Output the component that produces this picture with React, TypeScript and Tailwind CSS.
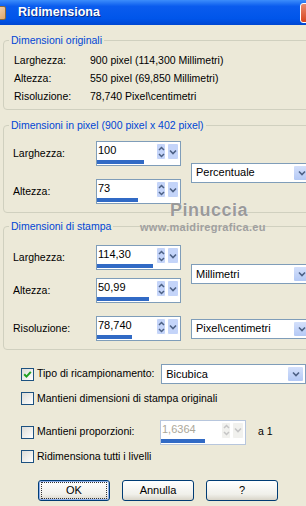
import React from "react";

const font = { fontFamily: '"Liberation Sans", Arial, sans-serif' };

function Chevron({ color = "#4D6185" }: { color?: string }) {
  return (
    <svg width="8" height="6" viewBox="0 0 8 6">
      <path d="M1 1.5 L4 4.5 L7 1.5" fill="none" stroke={color} strokeWidth="1.6" />
    </svg>
  );
}

function SpinBox({ value, bar, disabled = false, wide = false }: { value: string; bar: number; disabled?: boolean; wide?: boolean }) {
  const arrow = disabled ? "#C5C5C5" : "#4D6185";
  return (
    <div
      className={`flex flex-col h-[25px] border bg-white ${wide ? "w-[86px] h-[24px]" : "w-[85px]"} ${
        disabled ? "border-[#B7C6DD]" : "border-[#7F9DB9]"
      }`}
    >
      <div className="flex flex-1">
        <span className={`flex-1 pl-[1px] pt-[2px] text-[11px] leading-[13px] ${disabled ? "text-[#ACA899]" : "text-black"}`}>
          {value}
        </span>
        <div className="flex pt-[1px] pr-[1px] gap-[1px]">
          <div
            className={`flex flex-col items-center justify-center gap-[2px] w-[10px] h-[17px] rounded-[2px] border border-white ${
              disabled ? "bg-[#F1F1EE]" : "bg-[#C4D4F9]"
            }`}
          >
            <svg width="7" height="5" viewBox="0 0 7 5">
              <path d="M1 4 L3.5 1.5 L6 4" fill="none" stroke={arrow} strokeWidth="1.5" />
            </svg>
            <svg width="7" height="5" viewBox="0 0 7 5">
              <path d="M1 1 L3.5 3.5 L6 1" fill="none" stroke={arrow} strokeWidth="1.5" />
            </svg>
          </div>
          <div
            className={`flex items-center justify-center w-[12px] h-[17px] rounded-[2px] border border-white ${
              disabled ? "bg-[#F1F1EE]" : "bg-[#C4D4F9]"
            }`}
          >
            <Chevron color={arrow} />
          </div>
        </div>
      </div>
      <div className="h-[4px] mb-[1px] bg-[#316AC5]" style={{ width: bar }} />
    </div>
  );
}

function Select({ value, className = "" }: { value: string; className?: string }) {
  return (
    <div className={`flex items-center h-[20px] border border-[#7F9DB9] bg-white ${className}`}>
      <span className="flex-1 pl-[4px] text-[11px] leading-[13px]">{value}</span>
      <div className="flex items-center justify-center w-[17px] h-[16px] mr-[1px] rounded-[2px] border border-white bg-[linear-gradient(to_bottom,#D4E0FB,#B4C9F5)]">
        <Chevron />
      </div>
    </div>
  );
}

function Check({ checked = false }: { checked?: boolean }) {
  return (
    <div className="flex items-center justify-center w-[13px] h-[13px] shrink-0 border border-[#1C5180] bg-[linear-gradient(135deg,#DCDCD7,#FFFFFF)]">
      {checked && (
        <svg width="9" height="9" viewBox="0 0 9 9">
          <path d="M1.2 4.2 L3.5 6.6 L7.8 1.8" fill="none" stroke="#21A121" strokeWidth="2" />
        </svg>
      )}
    </div>
  );
}

function Group({ title, className = "", children }: { title: string; className?: string; children: React.ReactNode }) {
  return (
    <fieldset className={`ml-[3px] w-[330px] border border-[#D0D0BF] rounded-[4px] ${className}`}>
      <legend className="ml-[5px] px-[2px] text-[10.5px] leading-[13px] text-[#0046D5]">{title}</legend>
      {children}
    </fieldset>
  );
}

function SpinRow({ label, value, bar }: { label: string; value: string; bar: number }) {
  return (
    <div className="flex items-center">
      <span className="w-[83px]">{label}</span>
      <SpinBox value={value} bar={bar} />
    </div>
  );
}

function Button({ label, main = false }: { label: string; main?: boolean }) {
  return (
    <button
      className={`flex items-center justify-center w-[72px] h-[21px] rounded-[3px] border border-[#003C74] bg-[linear-gradient(to_bottom,#FFFFFF,#F0F0EA_70%,#D9D5C9)] text-[11px] ${
        main ? "shadow-[inset_0_0_0_1px_#8EB0EC]" : ""
      }`}
    >
      {main ? (
        <span className="flex items-center justify-center w-[64px] h-[15px] outline-1 outline-dotted outline-[#333]">{label}</span>
      ) : (
        label
      )}
    </button>
  );
}

export default function App() {
  return (
    <div className="relative w-[306px] h-[506px] overflow-hidden bg-[#ECE9D8] text-black text-[10.5px]" style={font}>
      <div className="flex w-[324px] h-[25px] items-center justify-between pr-[3px] bg-[linear-gradient(to_bottom,#3C8DFB,#0A5CEE_25%,#0055EA_75%,#0047D2)]">
        <div className="flex items-center">
          <div className="-ml-[10px] w-[16px] h-[14px] rounded-[2px] border border-[#8B6A3C] bg-[linear-gradient(135deg,#F6E3C6,#E0A56B)]" />
          <span className="ml-[12px] text-[12.5px] font-bold text-white [text-shadow:1px_1px_0_#0A2C8A]">Ridimensiona</span>
        </div>
        <div className="w-[21px] h-[20px] rounded-[3px] border border-white bg-[linear-gradient(to_bottom,#E98A6F,#D8451F)]" />
      </div>

      <Group title="Dimensioni originali" className="mt-[9px]">
        <div className="pl-[10px] pt-[5px] pb-[3px]">
          {[
            ["Larghezza:", "900 pixel (114,300 Millimetri)"],
            ["Altezza:", "550 pixel (69,850 Millimetri)"],
            ["Risoluzione:", "78,740 Pixel\\centimetri"],
          ].map(([l, v]) => (
            <div key={l} className="flex h-[18px] items-center">
              <span className="w-[76px]">{l}</span>
              <span>{v}</span>
            </div>
          ))}
        </div>
      </Group>

      <Group title="Dimensioni in pixel (900 pixel x 402 pixel)" className="mt-[9px]">
        <div className="flex items-center pl-[9px] pt-[9px] pb-[8px]">
          <div className="flex flex-col gap-[13px]">
            <SpinRow label="Larghezza:" value="100" bar={47} />
            <SpinRow label="Altezza:" value="73" bar={41} />
          </div>
          <Select value="Percentuale" className="ml-[10px] w-[121px]" />
        </div>
      </Group>

      <Group title="Dimensioni di stampa" className="mt-[7px]">
        <div className="pl-[9px] pt-[12px] pb-[8px]">
          <div className="flex items-center">
            <div className="flex flex-col gap-[8px]">
              <SpinRow label=" Larghezza:" value="114,30" bar={56} />
              <SpinRow label="Altezza:" value="50,99" bar={52} />
            </div>
            <Select value="Millimetri" className="ml-[10px] w-[121px]" />
          </div>
          <div className="flex items-center mt-[13px]">
            <SpinRow label=" Risoluzione:" value="78,740" bar={35} />
            <Select value="Pixel\centimetri" className="ml-[10px] w-[121px]" />
          </div>
        </div>
      </Group>

      <div className="pl-[21px]">
        <div className="flex items-center h-[20px] mt-[14px]">
          <Check checked />
          <span className="ml-[3px] w-[127px]">Tipo di ricampionamento:</span>
          <Select value="Bicubica" className="w-[148px]" />
        </div>
        <div className="flex items-center h-[13px] mt-[8px]">
          <Check />
          <span className="ml-[3px]">Mantieni dimensioni di stampa originali</span>
        </div>
        <div className="flex items-center h-[24px] mt-[15px]">
          <Check />
          <span className="ml-[3px] w-[123px]">Mantieni proporzioni:</span>
          <SpinBox value="1,6364" bar={44} disabled wide />
          <span className="ml-[12px]">a 1</span>
        </div>
        <div className="flex items-center h-[13px] mt-[6px]">
          <Check />
          <span className="ml-[3px]">Ridimensiona tutti i livelli</span>
        </div>
      </div>

      <div className="flex gap-[12px] pl-[38px] mt-[17px]">
        <Button label="OK" main />
        <Button label="Annulla" />
        <Button label="?" />
      </div>

      {/* watermark */}
      <div className="absolute left-[170px] top-[200px] text-[18px] leading-[20px] font-bold tracking-[0.5px] text-[#9A9A9A] [text-shadow:0_0_1px_#ffffff]">
        Pinuccia
      </div>
      <div className="absolute left-[140px] top-[221px] text-[11px] leading-[13px] font-bold tracking-[0.3px] text-[#A0A0A0]">
        www.maidiregrafica.eu
      </div>
    </div>
  );
}
